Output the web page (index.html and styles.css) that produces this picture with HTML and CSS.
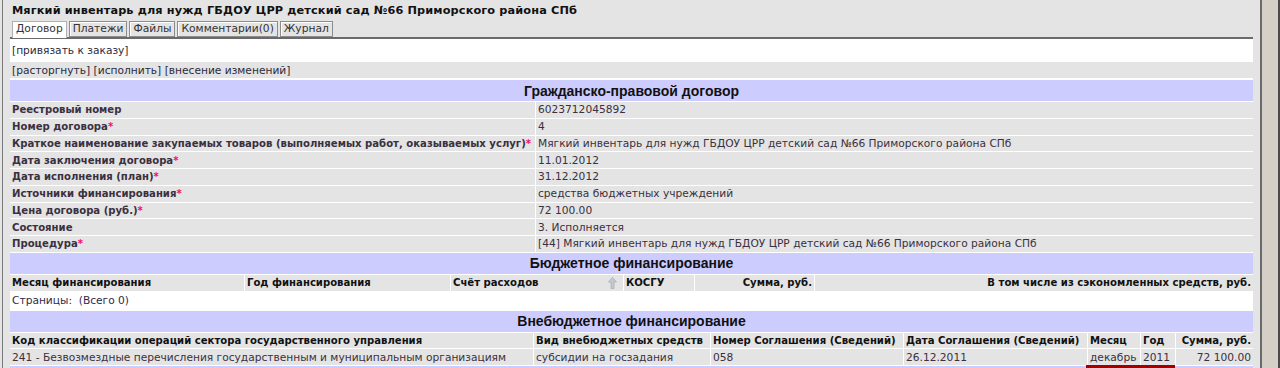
FILE: index.html
```html
<!DOCTYPE html>
<html lang="ru">
<head>
  <meta charset="UTF-8">
  <title>Контракт</title>
  <link rel="stylesheet" href="styles.css">
</head>
<body>
  <div class="window">
    <div class="page">
      <h1 class="title">Мягкий инвентарь для нужд ГБДОУ ЦРР детский сад №66 Приморского района СПб</h1>
      <div class="tabs">
        <span class="tab active">Договор</span>
        <span class="tab">Платежи</span>
        <span class="tab">Файлы</span>
        <span class="tab">Комментарии(0)</span>
        <span class="tab">Журнал</span>
      </div>
      <div class="panel">
        <div class="actions">[привязать к заказу]</div>
        <div class="actions grey">[расторгнуть] [исполнить] [внесение изменений]</div>

        <table class="grid props">
          <tr><th colspan="2" class="section">Гражданско-правовой договор</th></tr>
          <tr><td class="label">Реестровый номер</td><td>6023712045892</td></tr>
          <tr><td class="label">Номер договора<span class="req">*</span></td><td>4</td></tr>
          <tr><td class="label">Краткое наименование закупаемых товаров (выполняемых работ, оказываемых услуг)<span class="req">*</span></td><td>Мягкий инвентарь для нужд ГБДОУ ЦРР детский сад №66 Приморского района СПб</td></tr>
          <tr><td class="label">Дата заключения договора<span class="req">*</span></td><td>11.01.2012</td></tr>
          <tr><td class="label">Дата исполнения (план)<span class="req">*</span></td><td>31.12.2012</td></tr>
          <tr><td class="label">Источники финансирования<span class="req">*</span></td><td>средства бюджетных учреждений</td></tr>
          <tr><td class="label">Цена договора (руб.)<span class="req">*</span></td><td>72 100.00</td></tr>
          <tr><td class="label">Состояние</td><td>3. Исполняется</td></tr>
          <tr><td class="label">Процедура<span class="req">*</span></td><td>[44] Мягкий инвентарь для нужд ГБДОУ ЦРР детский сад №66 Приморского района СПб</td></tr>
        </table>

        <table class="grid budget">
          <tr><th colspan="6" class="section">Бюджетное финансирование</th></tr>
          <tr class="head">
            <td class="c-month">Месяц финансирования</td>
            <td class="c-year">Год финансирования</td>
            <td class="c-account">
              <span class="sortable">Счёт расходов
                <svg width="9" height="12" viewBox="0 0 9 12"><path d="M4.5 0.5 L8.5 5 H6 V11.5 H3 V5 H0.5 Z" fill="#c4c8d0" stroke="#aab0ba" stroke-width="0.8"/></svg>
              </span>
            </td>
            <td class="c-kosgu">КОСГУ</td>
            <td class="c-sum num">Сумма, руб.</td>
            <td class="num">В том числе из сэкономленных средств, руб.</td>
          </tr>
          <tr><td colspan="6" class="pager">Страницы:&nbsp; (Всего 0)</td></tr>
        </table>

        <table class="grid extra">
          <tr><th colspan="7" class="section">Внебюджетное финансирование</th></tr>
          <tr class="head">
            <td class="c-code">Код классификации операций сектора государственного управления</td>
            <td class="c-kind">Вид внебюджетных средств</td>
            <td class="c-num">Номер Соглашения (Сведений)</td>
            <td class="c-date">Дата Соглашения (Сведений)</td>
            <td class="c-m">Месяц</td>
            <td class="c-y">Год</td>
            <td class="num">Сумма, руб.</td>
          </tr>
          <tr>
            <td>241 - Безвозмездные перечисления государственным и муниципальным организациям</td>
            <td>субсидии на госзадания</td>
            <td>058</td>
            <td>26.12.2011</td>
            <td class="picked first">декабрь</td>
            <td class="picked">2011</td>
            <td class="num">72 100.00</td>
          </tr>
          <tr><th colspan="7" class="section">&nbsp;</th></tr>
        </table>
      </div>
    </div>
    <div class="scrollbar"></div>
  </div>
</body>
</html>
```

FILE: styles.css
```css
html, body {
  margin: 0;
  height: 100%;
  overflow: hidden;
}
body {
  font-family: "DejaVu Sans", Verdana, sans-serif;
  font-size: 10.65px;
  color: #333;
  background: #e4e4e4;
}
.window {
  display: flex;
  height: 100%;
}
.page {
  flex: 1;
  margin-left: 2px;
  border-left: 1px solid #7a7a7a;
  padding: 0 7px 0 7px;
}
.scrollbar {
  width: 16px;
  background: #d4d0c8;
  border-left: 2px solid #6a6a6a;
  border-right: 2px solid #4a4a4a;
}
.title {
  margin: 0;
  padding: 4px 2px 0;
  height: 15px;
  font-size: 11.3px;
  letter-spacing: 0.13px;
  font-weight: bold;
  color: #111;
}
.tabs {
  display: flex;
  gap: 2px;
  padding-left: 2px;
  height: 18px;
  align-items: flex-end;
}
.tab {
  height: 14px;
  line-height: 14px;
  padding: 0 3px;
  border: 1px solid #8c8c8c;
  box-shadow: inset 1px 1px 0 #fff;
  background: #e4e4e4;
  font-size: 10.7px;
  color: #333;
}
.tab.active {
  height: 16px;
  background: #fff;
  border-color: #b0b0b0;
  border-bottom: none;
  box-shadow: none;
  position: relative;
  top: 1px;
}
.panel {
  background: #fff;
  border-top: 2px solid #6a6a6a;
}
.actions {
  height: 15px;
  line-height: 16px;
  padding: 1px 2px 0;
  margin-top: 3px;
  color: #2a2a3a;
}
.actions.grey {
  background: #e4e4e4;
  margin-top: 4px;
}
.grid {
  border-collapse: separate;
  border-spacing: 1px;
  margin-left: -1px;
  width: calc(100% + 2px);
}
.props {
  margin-top: 1px;
}
.budget {
  margin-top: -1px;
}
.grid td {
  background: #e4e4e4;
  height: 15.75px;
  padding: 0 2px;
  white-space: nowrap;
  color: #3a3040;
}
.grid .section {
  background: #ccccff;
  height: 21px;
  padding: 0;
  font-family: "Liberation Sans", Arial, sans-serif;
  font-size: 14px;
  font-weight: bold;
  color: #111;
  text-align: center;
}
.label {
  width: 521px;
}
.label,
.head td {
  font-size: 10.1px;
  font-weight: bold;
  color: #111;
}
.req {
  color: #ee1166;
}
.num {
  text-align: right;
}
.budget .c-month { width: 230px; }
.budget .c-year { width: 201px; }
.budget .c-account { width: 168px; }
.budget .c-kosgu { width: 66px; }
.budget .c-sum { width: 115px; }
.sortable {
  display: flex;
  justify-content: space-between;
  align-items: center;
  padding-right: 4px;
}
.grid td.pager {
  height: 17px;
  background: #fff;
  color: #2e2a4a;
}
.extra .c-code { width: 519px; }
.extra .c-kind { width: 172px; }
.extra .c-num { width: 188px; }
.extra .c-date { width: 179px; }
.extra .c-m { width: 48px; }
.extra .c-y { width: 30px; }
.picked {
  position: relative;
}
.picked::after {
  content: "";
  position: absolute;
  left: 0;
  right: 0;
  bottom: -3px;
  height: 3px;
  background: #a00000;
}
.picked.first::after {
  left: -2px;
  right: -1px;
}
```
